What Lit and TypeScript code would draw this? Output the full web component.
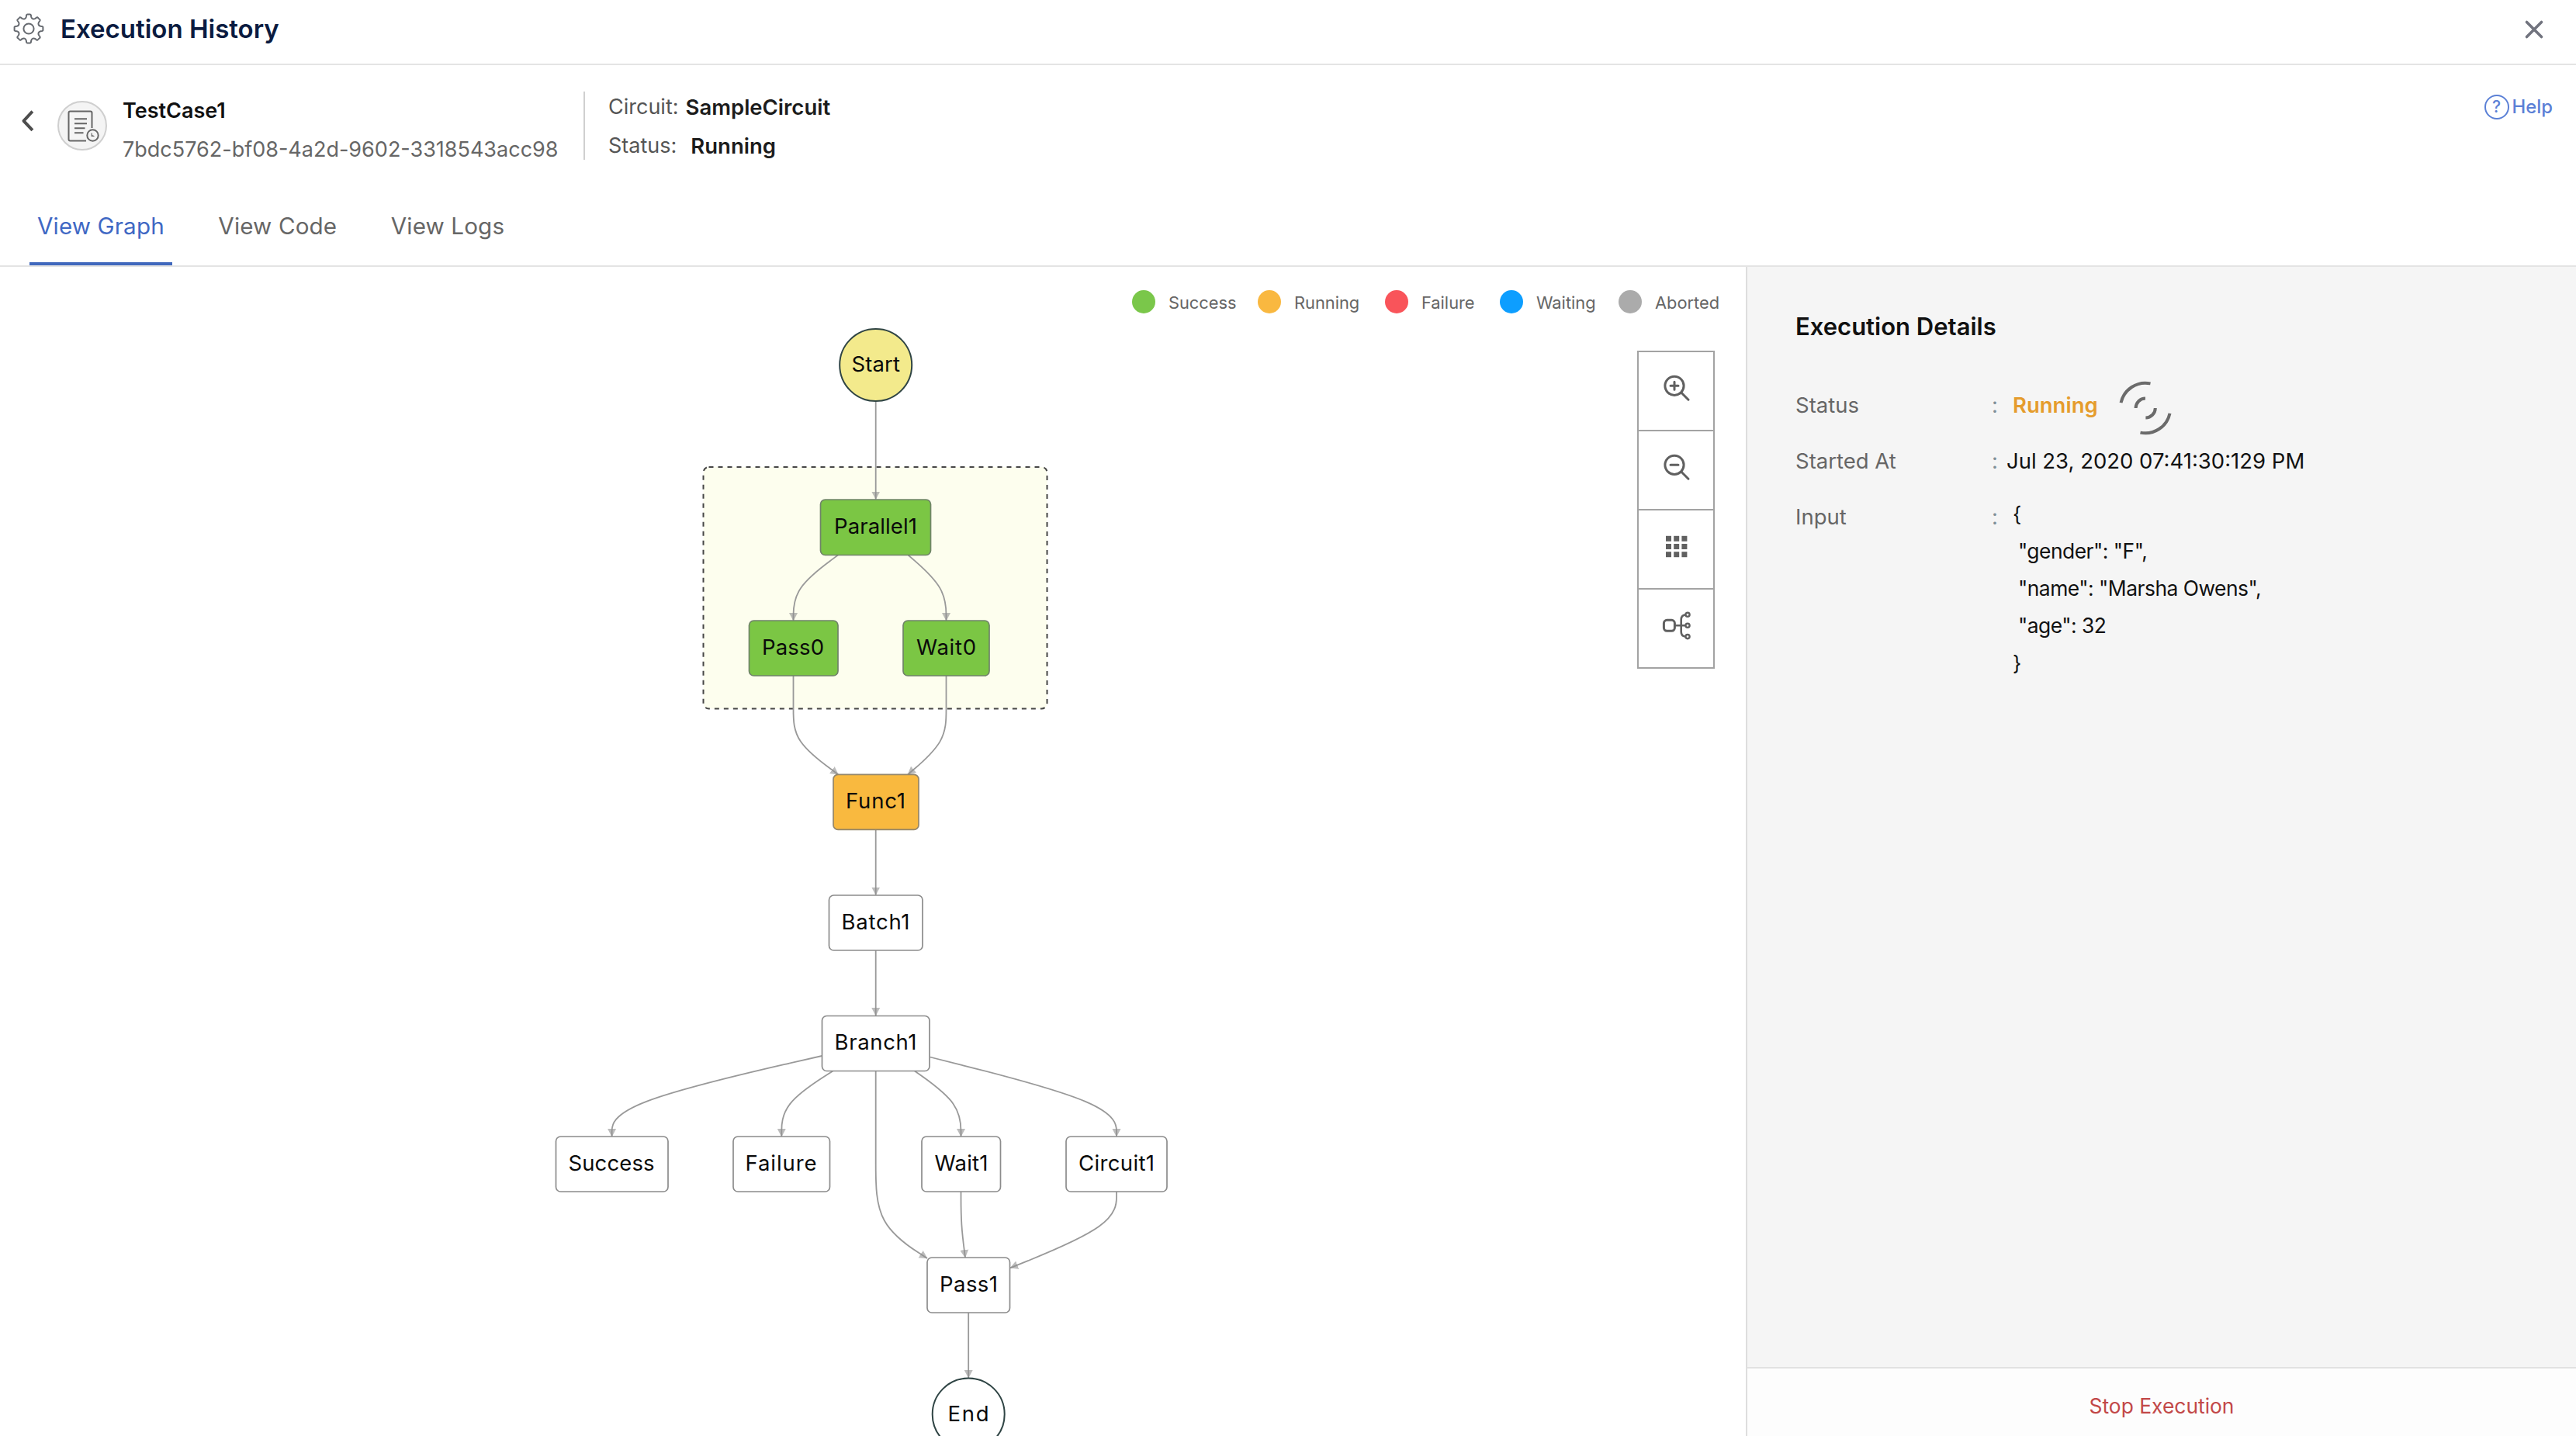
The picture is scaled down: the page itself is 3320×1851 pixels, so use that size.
import { LitElement, html, svg, css } from "lit";
import { customElement, property, state } from "lit/decorators.js";
import { classMap } from "lit/directives/class-map.js";
import { styleMap } from "lit/directives/style-map.js";

type Point = [number, number];

const r1 = (n: number) => Math.round(n * 10) / 10;

/** Smooth B-spline through layout points, starting and ending on the outer ones. */
function basisCurve(p: Point[]): string {
  let d = `M${p[0][0]},${p[0][1]}`;
  const n = p.length;
  if (n === 2) return `${d}L${p[1][0]},${p[1][1]}`;
  d += `L${r1((5 * p[0][0] + p[1][0]) / 6)},${r1((5 * p[0][1] + p[1][1]) / 6)}`;
  const segment = (a: Point, b: Point, c: Point) =>
    `C${r1((2 * a[0] + b[0]) / 3)},${r1((2 * a[1] + b[1]) / 3)} ` +
    `${r1((a[0] + 2 * b[0]) / 3)},${r1((a[1] + 2 * b[1]) / 3)} ` +
    `${r1((a[0] + 4 * b[0] + c[0]) / 6)},${r1((a[1] + 4 * b[1] + c[1]) / 6)}`;
  for (let i = 2; i < n; i++) d += segment(p[i - 2], p[i - 1], p[i]);
  d += segment(p[n - 2], p[n - 1], p[n - 1]);
  return `${d}L${p[n - 1][0]},${p[n - 1][1]}`;
}

function gearPath(cx: number, cy: number): string {
  const at = (r: number, deg: number) => {
    const t = ((deg - 90) * Math.PI) / 180;
    return `${r1(cx + r * Math.cos(t))},${r1(cy + r * Math.sin(t))}`;
  };
  let d = `M${at(17.4, -10)}`;
  for (let i = 0; i < 8; i++) {
    const a = i * 45;
    d += `Q${at(19, a - 8)} ${at(18.4, a - 4)}L${at(18.4, a + 4)}Q${at(19, a + 8)} ${at(17.4, a + 10)}`;
    d += `L${at(15.6, a + 12)}C${at(13.2, a + 17)} ${at(13.2, a + 28)} ${at(15.6, a + 33)}L${at(17.4, a + 35)}`;
  }
  return `${d}Z`;
}

interface GraphNode {
  label: string;
  x: number;
  y: number;
  w: number;
  h: number;
  tx: number;
  tw: number;
  status: "success" | "running" | "idle";
}

const NODES: GraphNode[] = [
  { label: "Parallel1", x: 1057.5, y: 644, w: 142, h: 71.5, tx: 1075, tw: 107, status: "success" },
  { label: "Pass0", x: 965.5, y: 800, w: 114.5, h: 71, tx: 982, tw: 80, status: "success" },
  { label: "Wait0", x: 1164, y: 800, w: 111, h: 71, tx: 1181, tw: 77, status: "success" },
  { label: "Func1", x: 1074, y: 998.4, w: 110, h: 71, tx: 1090, tw: 77, status: "running" },
  { label: "Batch1", x: 1068.5, y: 1154, w: 120.5, h: 71, tx: 1084.5, tw: 88, status: "idle" },
  { label: "Branch1", x: 1059.5, y: 1309.5, w: 138.5, h: 71, tx: 1075.5, tw: 106, status: "idle" },
  { label: "Success", x: 716.5, y: 1465, w: 144.5, h: 71, tx: 732.5, tw: 111, status: "idle" },
  { label: "Failure", x: 945, y: 1465, w: 124.5, h: 71, tx: 960.5, tw: 92, status: "idle" },
  { label: "Wait1", x: 1188, y: 1465, w: 101.5, h: 71, tx: 1204.5, tw: 69, status: "idle" },
  { label: "Circuit1", x: 1374, y: 1465, w: 130, h: 71, tx: 1390, tw: 98, status: "idle" },
  { label: "Pass1", x: 1195, y: 1621, w: 106.5, h: 71, tx: 1211, tw: 75, status: "idle" },
];

const EDGES: Point[][] = [
  [[1128.7, 517.5], [1128.7, 643.5]],
  [[1080, 715.5], [1022.5, 758], [1022.5, 800]],
  [[1170.5, 715.5], [1219.5, 758], [1219.5, 800]],
  [[1022.5, 871], [1022.5, 914], [1022.5, 956], [1080.4, 998.4]],
  [[1219.5, 871], [1219.5, 914], [1219.5, 956], [1170, 998.4]],
  [[1128.7, 1069.5], [1128.7, 1153.5]],
  [[1128.7, 1225], [1128.7, 1309]],
  [[1059.4, 1361], [788.6, 1423], [788.6, 1465]],
  [[1073.5, 1380.5], [1007.3, 1423], [1007.3, 1465]],
  [[1128.7, 1380.5], [1128.7, 1423], [1128.7, 1501], [1128.7, 1579], [1195, 1622]],
  [[1178.8, 1380.5], [1238.5, 1423], [1238.5, 1465]],
  [[1198.4, 1362.5], [1439, 1423], [1439, 1465]],
  [[1238.5, 1536], [1238.5, 1579], [1244, 1621]],
  [[1439, 1536], [1439, 1579], [1302, 1634.4]],
  [[1248.2, 1692], [1248.2, 1776]],
];

const LEGEND = [
  { name: "Success", tone: "success", width: 87 },
  { name: "Running", tone: "running", width: 89 },
  { name: "Failure", tone: "failure", width: 73 },
  { name: "Waiting", tone: "waiting", width: 78 },
  { name: "Aborted", tone: "aborted", width: 87 },
];

@customElement("execution-graph")
class ExecutionGraph extends LitElement {
  static styles = css`
    :host { display: block; height: 1507px; }
    svg { display: block; }
    .cluster { fill: #fdfeee; stroke: #464646; stroke-width: 2; stroke-dasharray: 6 6; }
    .edge { fill: none; stroke: #999; stroke-width: 1.8; }
    .arrow { fill: #8f8f8f; fill-opacity: 0.6; }
    .node { stroke: #8c8c8c; stroke-width: 1.7; }
    .node.success { fill: #7bc644; stroke: #6f8368; }
    .node.running { fill: #f9b93f; stroke: #94866a; }
    .node.idle { fill: #fff; }
    .terminal { stroke: #2f4444; stroke-width: 2; fill: #fff; }
    .terminal.start { fill: #f3ea8c; }
    text { font: 27.5px Inter, "Liberation Sans", sans-serif; fill: #0a0a0a; }
  `;

  render() {
    return html`
      <svg width="2250" height="1507" viewBox="0 344 2250 1507">
        <defs>
          <marker id="tip" markerUnits="userSpaceOnUse" markerWidth="11" markerHeight="12"
            refX="10" refY="6" orient="auto">
            <path class="arrow" d="M0 0.5L10.5 6L0 11.5z"></path>
          </marker>
        </defs>
        <rect class="cluster" x="906.5" y="602" width="443" height="311.5" rx="7"></rect>
        ${EDGES.map((p) => svg`<path class="edge" d=${basisCurve(p)} marker-end="url(#tip)"></path>`)}
        ${NODES.map((n) => svg`
          <rect class="node ${n.status}" x=${n.x} y=${n.y} width=${n.w} height=${n.h} rx="6"></rect>
          <text x=${n.tx} y=${n.y + 43.6} textLength=${n.tw}>${n.label}</text>`)}
        <circle class="terminal start" cx="1128.7" cy="470.5" r="46.5"></circle>
        <text x="1097.5" y="479" textLength="62.5">Start</text>
        <circle class="terminal" cx="1248.2" cy="1823" r="46.5"></circle>
        <text x="1221.5" y="1831.5" textLength="53">End</text>
      </svg>`;
  }
}

@customElement("status-legend")
class StatusLegend extends LitElement {
  static styles = css`
    :host { display: flex; gap: 28px; }
    .item { display: flex; align-items: center; gap: 17px; font-size: 21.8px; line-height: 30px; color: #666; }
    .label { padding-top: 2px; white-space: nowrap; }
    .dot { width: 30px; height: 30px; border-radius: 50%; }
    .success { background: #7ac74a; }
    .running { background: #f9b840; }
    .failure { background: #f9545a; }
    .waiting { background: #0d9eff; }
    .aborted { background: #ababab; }
  `;

  render() {
    return LEGEND.map((l) => html`
      <div class="item">
        <span class="dot ${l.tone}"></span>
        <span class="label" style=${styleMap({ width: `${l.width}px` })}>${l.name}</span>
      </div>`);
  }
}

@customElement("graph-toolbar")
class GraphToolbar extends LitElement {
  static styles = css`
    :host { display: flex; flex-direction: column; width: 96px; border: 2px solid #a3a3a3; background: #fff; }
    .tool { display: flex; align-items: center; justify-content: center; height: 100px; padding: 0; border: 0; background: none; }
    .tool + .tool { border-top: 2px solid #a3a3a3; height: 102px; }
    svg { fill: none; stroke: #606060; stroke-width: 3; stroke-linecap: round; overflow: visible; }
    .solid { fill: #606060; stroke: none; }
  `;

  render() {
    const cells = [0, 1, 2];
    return html`
      <button class="tool" aria-label="Zoom in">
        <svg width="40" height="40"><circle cx="18" cy="13.3" r="12.1"></circle>
          <path d="M26.8 22L36 31.2M13 13.3h10M18 8.3v10"></path></svg>
      </button>
      <button class="tool" aria-label="Zoom out">
        <svg width="40" height="40"><circle cx="18" cy="13.3" r="12.1"></circle>
          <path d="M26.8 22L36 31.2M13 13.3h10"></path></svg>
      </button>
      <button class="tool" aria-label="Grid">
        <svg width="40" height="40">
          ${cells.map((r) => cells.map((c) => svg`
            <rect class="solid" x=${7 + c * 10.2} y=${2.8 + r * 10.2} width="7" height="7"></rect>`))}
        </svg>
      </button>
      <button class="tool" aria-label="Layout">
        <svg width="40" height="40">
          <rect x="4.4" y="9.3" width="14" height="14" rx="4"></rect>
          <path d="M18.4 16.3H32M32 2.5C28.5 3 26.7 5 26.7 8.5V24.5C26.7 28 28.5 30 32 30.5" stroke-width="2.6"></path>
          <circle cx="35" cy="2.3" r="2.6" stroke-width="2.4"></circle>
          <circle cx="35" cy="16.3" r="2.6" stroke-width="2.4"></circle>
          <circle cx="35" cy="30.6" r="2.6" stroke-width="2.4"></circle>
        </svg>
      </button>`;
  }
}

@customElement("execution-details")
class ExecutionDetails extends LitElement {
  static styles = css`
    :host { display: flex; flex-direction: column; width: 1068px; border-left: 2px solid #dedede; background: #f5f5f5; }
    .body { flex: 1; padding: 52px 0 0 62px; font-size: 27.5px; }
    .title { margin: 0 0 40px; font-size: 31px; line-height: 50px; font-weight: 600; color: #111; }
    .row { display: flex; align-items: flex-start; line-height: 72px; }
    .label { width: 253px; color: #666; }
    .colon { width: 19px; color: #7f8f97; }
    .value { color: #111; white-space: pre; }
    .status { display: flex; align-items: center; gap: 26px; height: 72px; padding-left: 8px; white-space: nowrap;
      font-weight: 600; color: #e59c2c; }
    .spinner { fill: none; stroke: #6b6b6b; stroke-width: 4; margin-top: 8px; }
    .code { margin: 0; padding: 8px 0 0 8px; font: inherit; font-size: 26.4px; line-height: 48px; letter-spacing: -0.5px; }
    .footer { display: flex; align-items: center; justify-content: center; box-sizing: border-box; height: 89px;
      padding: 9px 0 0; border: 0; border-top: 2px solid #e2e2e2; background: #fdfdfd; color: #c24848;
      font: 26.4px Inter, "Liberation Sans", sans-serif; }
  `;

  @property() status = "Running";

  render() {
    const input = `{\n "gender": "F",\n "name": "Marsha Owens",\n "age": 32\n}`;
    return html`
      <div class="body">
        <h2 class="title">Execution Details</h2>
        <div class="row">
          <span class="label">Status</span><span class="colon">:</span>
          <span class="value status"><span>${this.status}</span><svg class="spinner" width="70" height="70" viewBox="-35 -35 70 70">
              <path d="M-31.5 -6.8A32.2 32.2 0 0 1 6.5 -31.6M31.5 6.8A32.2 32.2 0 0 1 -6.5 31.6M-12.4 0A12.4 12.4 0 0 1 0 -12.4M12.8 0A12.4 12.4 0 0 1 0.4 12.4"></path>
            </svg></span>
        </div>
        <div class="row">
          <span class="label">Started At</span><span class="colon">:</span>
          <span class="value">Jul 23, 2020 07:41:30:129 PM</span>
        </div>
        <div class="row">
          <span class="label">Input</span><span class="colon">:</span>
          <pre class="value code">${input}</pre>
        </div>
      </div>
      <button class="footer">Stop Execution</button>`;
  }
}

@customElement("app-root")
class AppRoot extends LitElement {
  static styles = css`
    :host { display: flex; flex-direction: column; width: 3320px; height: 1851px; overflow: hidden;
      background: #fff; font-family: Inter, "Liberation Sans", sans-serif; font-size: 27px; color: #555; }
    .titlebar { display: flex; align-items: center; box-sizing: border-box; height: 84px; padding: 0 41px 8px 17px;
      border-bottom: 2px solid #e4e4e4; }
    .gear { fill: none; stroke: #666a70; stroke-width: 2; stroke-linejoin: round; }
    .heading { flex: 1; margin: 0 0 0 21px; font-size: 33px; line-height: 40px; font-weight: 600; color: #0b1b40; }
    .close { fill: none; stroke: #71737e; stroke-width: 3.6; stroke-linecap: round; margin-top: 2px; }
    .summary { display: flex; align-items: flex-start; box-sizing: border-box; height: 156px; padding: 29px 30px 0 25px; line-height: 50px; }
    .back { fill: none; stroke: #4d4d4d; stroke-width: 4; stroke-linecap: square; stroke-linejoin: round; margin-top: 28px; }
    .avatar { margin: 17px 0 0 28px; fill: none; stroke: #666; stroke-width: 2; }
    .disc { fill: #f4f4f4; stroke: #cfcfcf; }
    .glyph { fill: #666; stroke: none; }
    .identity { margin: 5px 0 0 20px; width: 594px; }
    .name { font-weight: 600; color: #111; }
    .id { color: #666; }
    .divider { width: 2px; height: 88px; margin-top: 5px; background: #d0d0d0; }
    .facts { flex: 1; margin-left: 30px; }
    .fact { display: flex; }
    .strong { font-weight: 600; font-size: 27.5px; color: #1c1c1c; margin-left: 9px; }
    .strong.wide { margin-left: 18px; }
    .help { display: flex; align-items: center; gap: 4px; font-size: 23.8px; color: #5b80d6; font-weight: 500; }
    .mark { display: flex; align-items: center; justify-content: center; box-sizing: border-box; width: 32px; height: 32px;
      border: 2px solid #5b80d6; border-radius: 50%; font-size: 21px; line-height: 28px; }
    .tabs { display: flex; gap: 49.5px; padding-left: 38px; border-bottom: 2px solid #e4e4e4; }
    .tab { box-sizing: border-box; height: 102px; padding: 4px 10px 0; border: 0; border-bottom: 4px solid transparent;
      background: none; font: 29.6px Inter, "Liberation Sans", sans-serif; letter-spacing: 0.15px; color: #666; }
    .tab.active { color: #3f68c4; border-bottom-color: #4068bd; }
    .main { display: flex; flex: 1; min-height: 0; }
    .canvas { position: relative; display: flex; flex-direction: column; align-items: flex-end; flex: 1; }
    .graph { position: absolute; inset: 0; }
    .legend { position: relative; padding: 29px 30px 0 0; }
    .toolbar { position: relative; margin: 47px 40px 0 0; }
  `;

  @state() private active = "View Graph";

  render() {
    return html`
      <header class="titlebar">
        <svg class="gear" width="40" height="40"><path d=${gearPath(20, 20)}></path><circle cx="20" cy="20" r="6.6"></circle></svg>
        <h1 class="heading">Execution History</h1>
        <svg class="close" width="26" height="26"><path d="M3.5 3.5L22.5 22.5M22.5 3.5L3.5 22.5"></path></svg>
      </header>
      <section class="summary">
        <svg class="back" width="21" height="30"><path d="M15.5 4L5.5 14.8L15.5 25.5"></path></svg>
        <svg class="avatar" width="64" height="64">
          <circle class="disc" cx="32" cy="32" r="31"></circle>
          <path d="M37 51.6H16.5Q14.5 51.6 14.5 49.6V15.5Q14.5 13.5 16.5 13.5H42.5Q44.5 13.5 44.5 15.5V35M22 23.3H38M22 29.3H38M22 35.3H35.5M22 41.3H33.5"></path>
          <circle cx="45.5" cy="44.5" r="7.2"></circle>
          <path class="glyph" d="M43.6 41V46H48.2L46.2 44.4L44.8 44.2L44.8 42Z"></path>
        </svg>
        <div class="identity">
          <div class="name">TestCase1</div>
          <div class="id">7bdc5762-bf08-4a2d-9602-3318543acc98</div>
        </div>
        <div class="divider"></div>
        <div class="facts">
          <div class="fact">Circuit:<span class="strong">SampleCircuit</span></div>
          <div class="fact">Status:<span class="strong wide">Running</span></div>
        </div>
        <div class="help"><span class="mark">?</span>Help</div>
      </section>
      <nav class="tabs">
        ${["View Graph", "View Code", "View Logs"].map((t) => html`
          <button class=${classMap({ tab: true, active: t === this.active })}
            @click=${() => { this.active = t; }}>${t}</button>`)}
      </nav>
      <main class="main">
        <section class="canvas">
          <execution-graph class="graph"></execution-graph>
          <status-legend class="legend"></status-legend>
          <graph-toolbar class="toolbar"></graph-toolbar>
        </section>
        <execution-details></execution-details>
      </main>`;
  }
}
